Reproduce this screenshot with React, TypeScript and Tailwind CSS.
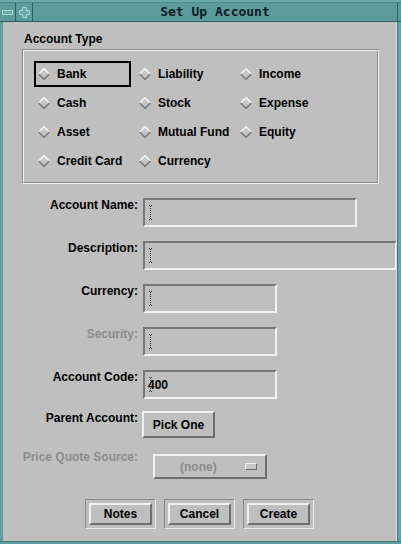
import React from 'react';

const raised =
  'border-2 border-t-[#f0f0f0] border-l-[#f0f0f0] border-b-[#6e6e6e] border-r-[#6e6e6e]';
const sunken =
  'border-2 border-t-[#777777] border-l-[#777777] border-b-[#f2f2f2] border-r-[#f2f2f2]';

function Diamond() {
  return (
    <svg width="12" height="12" viewBox="0 0 12 12" className="shrink-0">
      <polygon points="6,0.7 11.3,6 6,11.3 0.7,6" fill="#c6c6c6" />
      <polyline points="0.7,6 6,0.7 11.3,6" fill="none" stroke="#f6f6f6" strokeWidth="1.6" />
      <polyline points="0.7,6 6,11.3 11.3,6" fill="none" stroke="#7a7a7a" strokeWidth="1.6" />
    </svg>
  );
}

function Radio({ label, focused = false }: { label: string; focused?: boolean }) {
  return (
    <div
      className={`h-[26px] w-[97px] flex items-center gap-[7px] pl-[2px] border-2 ${
        focused ? 'border-black' : 'border-transparent'
      }`}
    >
      <Diamond />
      <span className="text-[12px] font-bold leading-none text-black whitespace-nowrap">{label}</span>
    </div>
  );
}

// dotted motif-style I-beam
function Caret() {
  return (
    <svg width="5" height="15" viewBox="0 0 5 15" className="absolute left-[3px] top-[5px]">
      <rect x="1" y="0" width="1" height="1" fill="#333" />
      <rect x="3" y="0" width="1" height="1" fill="#333" />
      <line x1="2.5" y1="1" x2="2.5" y2="14" stroke="#333" strokeWidth="1" strokeDasharray="1 1" />
      <rect x="1" y="14" width="1" height="1" fill="#333" />
      <rect x="3" y="14" width="1" height="1" fill="#333" />
    </svg>
  );
}

function Field({ className, value }: { className: string; value?: string }) {
  return (
    <div className={`relative h-[29px] shrink-0 ${sunken} ${className} flex items-center pl-[3px]`}>
      <Caret />
      {value && <span className="text-[12px] font-bold text-black leading-none">{value}</span>}
    </div>
  );
}

function FormRow({
  label,
  disabled = false,
  children,
}: {
  label: string;
  disabled?: boolean;
  children: React.ReactNode;
}) {
  return (
    <div className="flex items-start">
      <div
        className={`w-[135px] shrink-0 text-right text-[12px] font-bold leading-[14px] whitespace-nowrap ${
          disabled ? 'text-[#8c8c8c]' : 'text-black'
        }`}
      >
        {label}
      </div>
      {children}
    </div>
  );
}

function DlgButton({ label }: { label: string }) {
  return (
    <div className="w-[71px] h-[30px] border border-t-[#8a8a8a] border-l-[#8a8a8a] border-b-[#ececec] border-r-[#ececec] p-[3px]">
      <div className={`h-full ${raised} flex items-center justify-center text-[12px] font-bold text-black`}>
        {label}
      </div>
    </div>
  );
}

export default function App() {
  const types = [
    ['Bank', 'Liability', 'Income'],
    ['Cash', 'Stock', 'Expense'],
    ['Asset', 'Mutual Fund', 'Equity'],
    ['Credit Card', 'Currency', ''],
  ];

  return (
    <div className="w-[401px] h-[544px] flex flex-col bg-[#5f9ea0] font-['Liberation_Sans',Arial,sans-serif] overflow-hidden">
      {/* window frame top */}
      <div className="h-[3px] bg-[#6aa9aa] border-b border-[#4d8c8d]" />

      {/* Title bar */}
      <div className="h-[19px] flex bg-[#5c9b9c] border-b border-[#2f5e5f]">
        <div className="w-[16px] border-r border-[#2f5e5f] flex items-center justify-center">
          <svg width="11" height="5" viewBox="0 0 11 5">
            <rect x="0.5" y="0.5" width="10" height="4" fill="#6aa7a8" stroke="#a9d6d6" />
          </svg>
        </div>
        <div className="w-[17px] border-r border-[#2f5e5f] flex items-center justify-center">
          <svg width="11" height="11" viewBox="0 0 11 11">
            <polygon
              points="3.5,0.5 7.5,0.5 7.5,3.5 10.5,3.5 10.5,7.5 7.5,7.5 7.5,10.5 3.5,10.5 3.5,7.5 0.5,7.5 0.5,3.5 3.5,3.5"
              fill="#6aa7a8"
              stroke="#a9d6d6"
            />
          </svg>
        </div>
        <div className="flex-1 flex items-center justify-center font-['DejaVu_Sans_Mono',monospace] text-[13px] font-bold text-[#0c1c1c]">
          Set Up Account
        </div>
        <div className="w-[4px] border-l border-[#2f5e5f]" />
      </div>

      <div className="flex-1 flex min-h-0">
        <div className="w-[3px] bg-[#5f9ea0]" />

        {/* Dialog body */}
        <div className="flex-1 bg-[#bfbfbf] border-r border-[#dedede] overflow-hidden flex flex-col">
          <div className="pt-[10px] pl-[21px] text-[12px] font-bold leading-[14px] text-black">Account Type</div>

          <div className="mt-[3px] ml-[19px] w-[357px] border border-t-[#8a8a8a] border-l-[#8a8a8a] border-b-[#f4f4f4] border-r-[#f4f4f4]">
            <div className="border border-t-[#f4f4f4] border-l-[#f4f4f4] border-b-[#8a8a8a] border-r-[#8a8a8a] pt-[10px] pb-[8px] pl-[10px]">
              <div className="grid grid-cols-[97px_97px_97px] gap-x-[4px] gap-y-[3px]">
                {types.flat().map((t, i) =>
                  t ? <Radio key={i} label={t} focused={t === 'Bank'} /> : <div key={i} />
                )}
              </div>
            </div>
          </div>

          <div className="mt-[14px] flex flex-col gap-[14px]">
            <FormRow label="Account Name:">
              <div className="ml-[5px]">
                <Field className="w-[214px]" />
              </div>
            </FormRow>
            <FormRow label="Description:">
              <div className="ml-[5px]">
                <Field className="w-[254px]" />
              </div>
            </FormRow>
            <FormRow label="Currency:">
              <div className="ml-[5px]">
                <Field className="w-[134px]" />
              </div>
            </FormRow>
            <FormRow label="Security:" disabled>
              <div className="ml-[5px]">
                <Field className="w-[134px]" />
              </div>
            </FormRow>
            <FormRow label="Account Code:">
              <div className="ml-[5px]">
                <Field className="w-[134px]" value="400" />
              </div>
            </FormRow>
          </div>

          <div className="mt-[12px]">
            <FormRow label="Parent Account:">
              <div
                className={`ml-[4px] w-[73px] h-[27px] ${raised} flex items-center justify-center text-[12px] font-bold text-black`}
              >
                Pick One
              </div>
            </FormRow>
          </div>

          <div className="mt-[12px]">
            <FormRow label="Price Quote Source:" disabled>
              <div
                className={`ml-[15px] mt-[4px] w-[114px] h-[25px] ${raised} flex items-center justify-between pl-[25px] pr-[8px]`}
              >
                <span className="text-[12px] font-bold text-[#8c8c8c] leading-none">(none)</span>
                <div className="w-[12px] h-[7px] bg-[#c8c8c8] border border-t-[#f0f0f0] border-l-[#f0f0f0] border-b-[#6e6e6e] border-r-[#6e6e6e]" />
              </div>
            </FormRow>
          </div>

          <div className="mt-[20px] flex justify-center gap-[8px]">
            <DlgButton label="Notes" />
            <DlgButton label="Cancel" />
            <DlgButton label="Create" />
          </div>
        </div>

        <div className="w-[4px] bg-[#66a5a6] border-l border-[#3f7a7b]" />
      </div>

      {/* window frame bottom */}
      <div className="h-[3px] bg-[#5f9ea0] border-t border-[#3f7a7b]" />
    </div>
  );
}
